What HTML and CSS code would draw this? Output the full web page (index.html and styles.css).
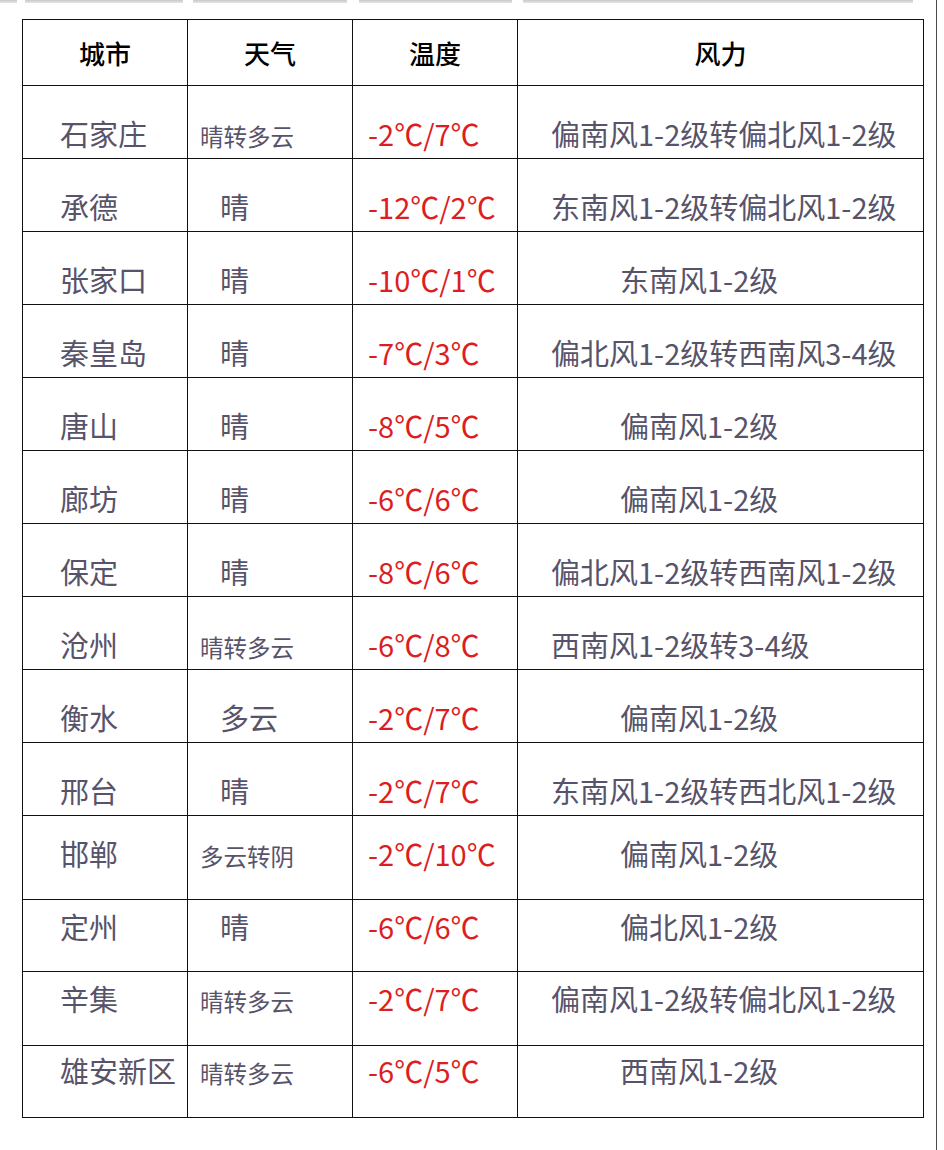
FILE: index.html
```html
<!DOCTYPE html>
<html lang="zh-CN">
<head>
<meta charset="utf-8">
<title>天气预报</title>
<link rel="stylesheet" href="styles.css">
</head>
<body>
<div class="page">
  <div class="strip">
    <span class="bar b0"></span>
    <span class="bar b1"></span>
    <span class="bar b2"></span>
    <span class="bar b3"></span>
    <span class="bar b4"></span>
  </div>
  <table class="weather">
    <colgroup>
      <col class="c-city">
      <col class="c-sky">
      <col class="c-temp">
      <col class="c-wind">
    </colgroup>
    <thead>
      <tr class="head">
        <th>城市</th><th>天气</th><th>温度</th><th>风力</th>
      </tr>
    </thead>
    <tbody>
      <tr class="r-low">
        <td class="city">石家庄</td><td class="sky small">晴转多云</td><td class="temp">-2℃/7℃</td><td class="wind">偏南风1-2级转偏北风1-2级</td>
      </tr>
      <tr class="r-low">
        <td class="city">承德</td><td class="sky big">晴</td><td class="temp">-12℃/2℃</td><td class="wind">东南风1-2级转偏北风1-2级</td>
      </tr>
      <tr class="r-low">
        <td class="city">张家口</td><td class="sky big">晴</td><td class="temp">-10℃/1℃</td><td class="wind short">东南风1-2级</td>
      </tr>
      <tr class="r-low">
        <td class="city">秦皇岛</td><td class="sky big">晴</td><td class="temp">-7℃/3℃</td><td class="wind">偏北风1-2级转西南风3-4级</td>
      </tr>
      <tr class="r-low">
        <td class="city">唐山</td><td class="sky big">晴</td><td class="temp">-8℃/5℃</td><td class="wind short">偏南风1-2级</td>
      </tr>
      <tr class="r-low">
        <td class="city">廊坊</td><td class="sky big">晴</td><td class="temp">-6℃/6℃</td><td class="wind short">偏南风1-2级</td>
      </tr>
      <tr class="r-low">
        <td class="city">保定</td><td class="sky big">晴</td><td class="temp">-8℃/6℃</td><td class="wind">偏北风1-2级转西南风1-2级</td>
      </tr>
      <tr class="r-low">
        <td class="city">沧州</td><td class="sky small">晴转多云</td><td class="temp">-6℃/8℃</td><td class="wind">西南风1-2级转3-4级</td>
      </tr>
      <tr class="r-low">
        <td class="city">衡水</td><td class="sky big">多云</td><td class="temp">-2℃/7℃</td><td class="wind short">偏南风1-2级</td>
      </tr>
      <tr class="r-low">
        <td class="city">邢台</td><td class="sky big">晴</td><td class="temp">-2℃/7℃</td><td class="wind">东南风1-2级转西北风1-2级</td>
      </tr>
      <tr class="r-mid">
        <td class="city">邯郸</td><td class="sky small">多云转阴</td><td class="temp">-2℃/10℃</td><td class="wind short">偏南风1-2级</td>
      </tr>
      <tr class="r-top">
        <td class="city">定州</td><td class="sky big">晴</td><td class="temp">-6℃/6℃</td><td class="wind short">偏北风1-2级</td>
      </tr>
      <tr class="r-top r-tall">
        <td class="city">辛集</td><td class="sky small">晴转多云</td><td class="temp">-2℃/7℃</td><td class="wind">偏南风1-2级转偏北风1-2级</td>
      </tr>
      <tr class="r-top r-last">
        <td class="city">雄安新区</td><td class="sky small">晴转多云</td><td class="temp">-6℃/5℃</td><td class="wind short">西南风1-2级</td>
      </tr>
    </tbody>
  </table>
</div>
</body>
</html>
```
FILE: styles.css
```css
html, body {
  margin: 0;
  padding: 0;
  background: #ffffff;
}

body {
  width: 944px;
  height: 1150px;
  overflow: hidden;
  font-family: "Noto Sans CJK SC", "Noto Sans", sans-serif;
}

.page {
  width: 936px;
  height: 1150px;
  border-right: 1px solid #4a4a4a;
  box-sizing: content-box;
}

.strip {
  display: flex;
  height: 3px;
}

.bar {
  display: block;
  height: 3px;
  background: linear-gradient(#c9c9cc, #e6e6e8);
}

.b0 { width: 17px; }
.b1 { width: 158px; margin-left: 8px; }
.b2 { width: 154px; margin-left: 10px; }
.b3 { width: 153px; margin-left: 12px; }
.b4 { width: 390px; margin-left: 11px; }

.weather {
  margin: 16px 0 0 22px;
  border-collapse: collapse;
  table-layout: fixed;
  width: 901px;
  border: 1px solid #111;
}

.c-city { width: 165px; }
.c-sky { width: 165px; }
.c-temp { width: 165px; }
.c-wind { width: 406px; }

.weather th,
.weather td {
  border: 1px solid #111;
  padding: 0;
  white-space: nowrap;
}

.head {
  height: 66px;
}

.weather th {
  font-weight: 500;
  font-size: 26px;
  color: #000;
  text-align: center;
  vertical-align: middle;
  padding-top: 1px;
  line-height: 30px;
}

.weather td {
  line-height: 30px;
  font-size: 29px;
  color: #57536a;
  vertical-align: baseline;
  text-align: left;
}

.r-low { height: 73px; }
.r-low td { padding-top: 32px; }

.r-mid { height: 84px; }
.r-mid td { padding-top: 22px; }

.r-top { height: 72px; }
.r-top td { padding-top: 11px; }
.r-tall { height: 74px; }
.r-last td { padding-top: 9px; }

.city {
  padding-left: 37px !important;
}

.sky.small {
  font-size: 23.5px;
  padding-left: 12px !important;
}

.sky.big {
  padding-left: 32px !important;
}

.temp {
  color: #dc1e22 !important;
  padding-left: 15px !important;
}

.wind {
  padding-left: 33px !important;
}

.wind.short {
  padding-left: 102px !important;
}
```
